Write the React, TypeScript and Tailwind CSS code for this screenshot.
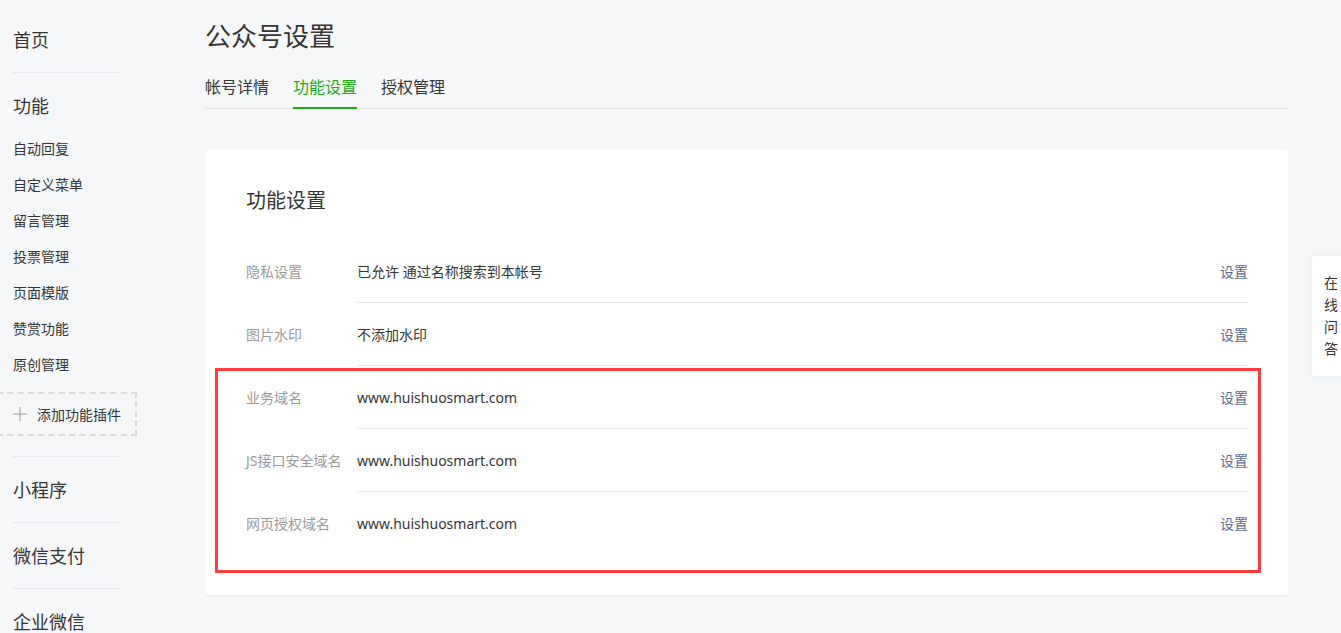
import React from 'react';

const font = "font-['Noto_Sans','Noto_Sans_CJK_SC',sans-serif]";

const menuItems = ['自动回复', '自定义菜单', '留言管理', '投票管理', '页面模版', '赞赏功能', '原创管理'];

const rows = [
  { label: '隐私设置', value: '已允许 通过名称搜索到本帐号' },
  { label: '图片水印', value: '不添加水印' },
];

const domainRows = [
  { label: '业务域名', value: 'www.huishuosmart.com' },
  { label: 'JS接口安全域名', value: 'www.huishuosmart.com' },
  { label: '网页授权域名', value: 'www.huishuosmart.com' },
];

function Divider() {
  return <div className="mt-[20px] h-px w-[108px] bg-[#e4e8eb]" />;
}

function Sidebar() {
  return (
    <aside className="w-[205px] shrink-0 pl-[13px] pt-[28px] text-[#353535]">
      <div className="text-[18px] leading-[24px]">首页</div>
      <Divider />
      <div className="mt-[21px] text-[18px] leading-[24px]">功能</div>
      <ul className="mt-[13px]">
        {menuItems.map((item) => (
          <li key={item} className="text-[14px] leading-[36px]">
            {item}
          </li>
        ))}
      </ul>
      <div className="ml-[-16px] mt-[9px] flex h-[44px] w-[140px] items-center border-2 border-dashed border-[#d9dadc] pl-[14px] text-[14px] text-[#353535]">
        <svg width="14" height="14" viewBox="0 0 14 14" className="mr-[10px]">
          <path d="M7 0v14M0 7h14" stroke="#9a9a9a" strokeWidth="1" fill="none" />
        </svg>
        添加功能插件
      </div>
      <Divider />
      <div className="mt-[21px] text-[18px] leading-[24px]">小程序</div>
      <Divider />
      <div className="mt-[21px] text-[18px] leading-[24px]">微信支付</div>
      <Divider />
      <div className="mt-[21px] text-[18px] leading-[24px]">企业微信</div>
    </aside>
  );
}

function Row({ label, value, last }: { label: string; value: string; last?: boolean }) {
  return (
    <div className="flex h-[63px] text-[14px]">
      <div className="flex w-[111px] shrink-0 items-center text-[#9a9a9a]">{label}</div>
      <div
        className={`flex flex-1 items-center justify-between ${last ? '' : 'border-b border-[#e7e7eb]'}`}
      >
        <span className="text-[#353535]">{value}</span>
        <a className="cursor-pointer text-[#576b95]">设置</a>
      </div>
    </div>
  );
}

export default function App() {
  return (
    <div className={`relative flex h-[633px] overflow-hidden bg-[#f6f7f9] ${font}`}>
      <Sidebar />
      <main className="w-[1083px] shrink-0 pt-[19px]">
        <h1 className="text-[26px] leading-[34px] text-[#353535]">公众号设置</h1>
        <nav className="mt-[22px] flex h-[34px] gap-[24px] border-b border-[#e0e0e0] text-[16px] leading-[24px]">
          <span className="text-[#353535]">帐号详情</span>
          <span className="-mb-px border-b-2 border-[#1aad19] pb-[8px] text-[#1aad19]">功能设置</span>
          <span className="text-[#353535]">授权管理</span>
        </nav>

        <section className="mt-[41px] rounded-[4px] bg-white pb-[40px] pl-[41px] pr-[40px] pt-[37px] shadow-[0_1px_2px_rgba(0,0,0,0.05)]">
          <h2 className="text-[20px] leading-[28px] text-[#353535]">功能设置</h2>
          <div className="mt-[25px]">
            {rows.map((r) => (
              <Row key={r.label} label={r.label} value={r.value} />
            ))}
            <div className="relative">
              {domainRows.map((r, i) => (
                <Row key={r.label} label={r.label} value={r.value} last={i === domainRows.length - 1} />
              ))}
              <span className="pointer-events-none absolute -left-[31px] -right-[13px] top-[2px] -bottom-[18px] border-[3px] border-[#ff3b3b]" />
            </div>
          </div>
        </section>
      </main>

      <div className="absolute right-0 top-[256px] w-[29px] rounded-l-[3px] bg-white pb-[16px] pl-[12px] pt-[16px] text-[14px] leading-[22px] text-[#353535] shadow-[0_0_6px_rgba(0,0,0,0.06)]">
        <div>在</div>
        <div>线</div>
        <div>问</div>
        <div>答</div>
      </div>
    </div>
  );
}
